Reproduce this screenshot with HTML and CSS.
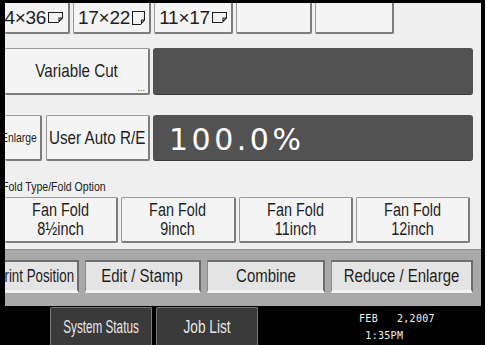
FILE: index.html
```html
<!DOCTYPE html>
<html lang="en">
<head>
    <meta charset="UTF-8">
    <title>Copier - Reduce / Enlarge</title>
    <link rel="stylesheet" href="styles.css">
</head>
<body>

    <div class="screen">
        <div class="panel">

            <!-- paper sizes, scrolled half out of view -->
            <div class="row paper-row">
                <div class="btn paper w1 clip"><span class="t">24×36</span><svg class="sheet wide" viewBox="0 0 15 11"><path d="M0.5 0.5H14.5V6L10 10.5H0.5Z M14.5 6H11V10" /></svg></div>
                <div class="btn paper w2"><span class="t">17×22</span><svg class="sheet tall" viewBox="0 0 13 14"><path d="M0.5 0.5H12.5V9L8.5 13.5H0.5Z M12.5 9H9.5V13" /></svg></div>
                <div class="btn paper w3"><span class="t">11×17</span><svg class="sheet wide" viewBox="0 0 15 11"><path d="M0.5 0.5H14.5V6L10 10.5H0.5Z M14.5 6H11V10" /></svg></div>
                <div class="btn paper w4"></div>
                <div class="btn paper w5"></div>
            </div>

            <div class="row cut-row">
                <div class="btn cut"><span class="t">Variable Cut</span><span class="more">...</span></div>
                <div class="display"></div>
            </div>

            <div class="row ratio-row">
                <div class="btn small clip"><span class="t">Auto Reduce / Enlarge</span></div>
                <div class="btn user"><span class="t">User Auto R/E</span></div>
                <div class="display ratio">100.0%</div>
            </div>

            <div class="label"><span class="t">Fold Type/Fold Option</span></div>

            <div class="row fold-row">
                <div class="btn fold"><span class="t">Fan Fold<br>8½inch</span></div>
                <div class="btn fold"><span class="t">Fan Fold<br>9inch</span></div>
                <div class="btn fold"><span class="t">Fan Fold<br>11inch</span></div>
                <div class="btn fold"><span class="t">Fan Fold<br>12inch</span></div>
            </div>

            <!-- function tabs -->
            <div class="tabs">
                <div class="tab t1 clip"><span class="t">Print Position</span></div>
                <div class="tab t2"><span class="t">Edit / Stamp</span></div>
                <div class="tab t3"><span class="t">Combine</span></div>
                <div class="tab t4"><span class="t">Reduce / Enlarge</span></div>
            </div>
        </div>

        <div class="status-bar">
            <div class="sys-btn status"><span class="t">System Status</span></div>
            <div class="sys-btn jobs"><span class="t">Job List</span></div>
            <div class="clock">FEB&nbsp;&nbsp;&nbsp;2,2007<br>&nbsp;1:35PM</div>
        </div>
    </div>

</body>
</html>
```

FILE: styles.css
```css
body {
    margin: 0;
    background-color: #fff;
    font-family: "Liberation Sans", Arial, sans-serif;
}

.screen {
    width: 485px;
    height: 345px;
    box-sizing: border-box;
    background-color: #000;
    border-top: 3px solid #000;
    border-left: 5px solid #000;
    border-right: 4px solid #000;
    display: flex;
    flex-direction: column;
}

.panel {
    height: 303px;
    background-color: #efefef;
    overflow: hidden;
}

/* the panel font is tall and narrow */
.t {
    display: inline-block;
    white-space: nowrap;
    flex-shrink: 0;
    transform: scaleX(0.8);
}

.row {
    display: flex;
}

.btn {
    box-sizing: border-box;
    background-color: #f4f4f4;
    border: 1px solid #9a9a9a;
    border-right: 2px solid #7c7c7c;
    border-bottom: 2px solid #7c7c7c;
    border-radius: 2px;
    color: #1e1e1e;
    font-size: 19px;
    display: flex;
    align-items: center;
    justify-content: center;
    white-space: nowrap;
}

/* paper size row */
.paper-row {
    margin-top: -5px;
    gap: 3px;
}

.paper {
    height: 36px;
    padding-top: 4px;
}

.paper .t,
.paper.clip .t {
    transform: none;
    letter-spacing: -0.3px;
}

.w1 { width: 65px; padding-right: 5px; border-left: none; }
.w2 { width: 78px; }
.w3 { width: 79px; }
.w4 { width: 76px; }
.w5 { width: 79px; }

.sheet {
    flex-shrink: 0;
    margin-left: 2px;
    fill: none;
    stroke: #1e1e1e;
    stroke-width: 1.1;
}

.sheet.wide { width: 15px; height: 11px; }
.sheet.tall { width: 13px; height: 14px; }

/* cut length row */
.cut-row {
    margin-top: 14px;
    height: 47px;
    gap: 3px;
}

.cut {
    width: 145px;
    position: relative;
    border-left: none;
}

.more {
    position: absolute;
    right: 3px;
    bottom: 0;
    font-size: 9px;
    line-height: 9px;
    color: #555;
}

.display {
    flex: 1;
    margin-right: 8px;
    background-color: #525252;
    border-radius: 3px;
    border-bottom: 1px solid #3c3c3c;
}

/* ratio row */
.ratio-row {
    margin-top: 20px;
    height: 46px;
    gap: 4px;
}

.ratio-row .display {
    margin-left: -1px;
}

.small {
    width: 37px;
    font-size: 13px;
    border-left: none;
    padding-right: 3px;
}

.user {
    width: 104px;
}

.ratio {
    color: #fff;
    font-family: "DejaVu Sans", sans-serif;
    font-size: 30px;
    letter-spacing: 3.5px;
    display: flex;
    align-items: center;
    padding-left: 16px;
    padding-top: 3px;
}

.label {
    margin-top: 20px;
    margin-left: -3px;
    height: 12px;
    font-size: 12px;
    line-height: 12px;
    color: #222;
    white-space: nowrap;
}

.label .t {
    transform: scaleX(0.88);
    transform-origin: left center;
}

/* fold options */
.fold-row {
    margin-top: 4px;
    height: 46px;
    gap: 3px;
    padding-right: 11px;
}

.fold {
    flex: 1;
    font-size: 18px;
    line-height: 19px;
    text-align: center;
    padding-top: 1px;
}

.fold:first-child {
    border-left: none;
}

/* tab strip */
.tabs {
    margin-top: 6px;
    height: 57px;
    box-sizing: border-box;
    background-color: #a9a9a9;
    border-top: 1px solid #8d8d8d;
    display: flex;
    gap: 6px;
    padding: 10px 8px 13px 0;
}

.tab {
    box-sizing: border-box;
    background-color: #e4e4e4;
    border: 2px solid #6e6e6e;
    border-left: 1px solid #8a8a8a;
    border-bottom: 3px solid #f2f2f2;
    color: #1e1e1e;
    font-size: 18px;
    display: flex;
    align-items: center;
    justify-content: center;
    white-space: nowrap;
}

.tab .t {
    transform: scaleX(0.83);
}

.t1 { width: 78px; border-left: none; padding-right: 2px; }
.t2 { width: 124px; }
.t3 { width: 125px; }
.t4 { flex: 1; }

/* buttons scrolled partly out on the left */
.btn.clip,
.tab.clip {
    overflow: hidden;
    justify-content: flex-end;
}

.clip .t {
    transform-origin: right center;
}

.tab.clip .t {
    transform: scaleX(0.74);
}

/* status bar */
.status-bar {
    flex: 1;
    display: flex;
    padding-left: 45px;
    padding-top: 1px;
    gap: 4px;
}

.sys-btn {
    width: 102px;
    box-sizing: border-box;
    background-color: #3a3a3a;
    border: 1px solid #7a7a7a;
    border-bottom: none;
    border-radius: 2px 2px 0 0;
    color: #e6e6e6;
    font-size: 18px;
    display: flex;
    align-items: center;
    justify-content: center;
    padding-top: 2px;
}

.status .t {
    transform: scaleX(0.65);
}

.jobs .t {
    transform: scaleX(0.76);
}

.clock {
    margin-left: 97px;
    padding-top: 3px;
    color: #f2f2f2;
    font-family: "DejaVu Sans Mono", monospace;
    font-size: 10px;
    line-height: 17px;
    letter-spacing: 0.3px;
}
```
